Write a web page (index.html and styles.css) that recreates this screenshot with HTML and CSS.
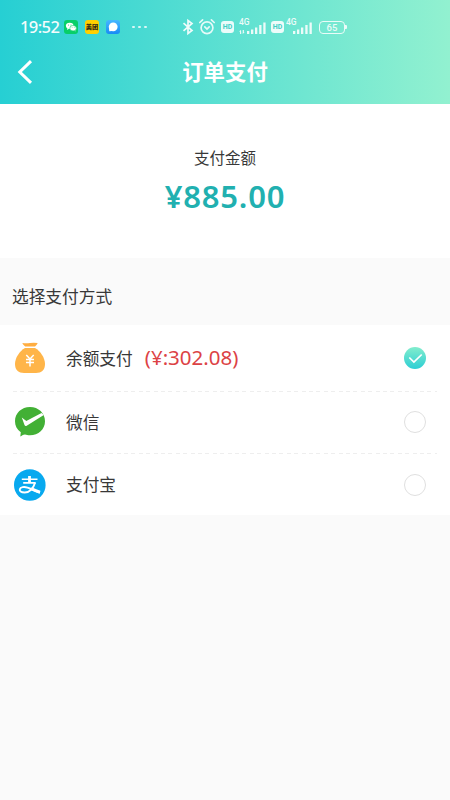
FILE: index.html
```html
<!DOCTYPE html>
<html lang="zh-CN">
<head>
<meta charset="utf-8">
<meta name="viewport" content="width=device-width, initial-scale=1">
<title>订单支付</title>
<link rel="stylesheet" href="styles.css">
</head>
<body>
<header class="header">
  <div class="status">
    <span class="time">19:52</span>
    <svg class="app-icon wechat-app" width="14" height="14" viewBox="0 0 14 14"><rect width="14" height="14" rx="3" fill="#07cf68"/><ellipse cx="5.7" cy="5.8" rx="3.8" ry="3.1" fill="#fff"/><path d="M3.5 8 3 10l2-1.2zM11 9.6l.5 1.8-1.8-.8z" fill="#fff"/><ellipse cx="9.1" cy="8.2" rx="3.3" ry="2.7" fill="#fff" stroke="#07cf68" stroke-width=".6"/><g fill="#07cf68"><circle cx="4.5" cy="5" r=".5"/><circle cx="7" cy="5" r=".5"/><circle cx="8.1" cy="7.7" r=".4"/><circle cx="10.2" cy="7.7" r=".4"/></g></svg>
    <span class="app-icon meituan">美团</span>
    <svg class="app-icon" width="14" height="14" viewBox="0 0 14 14"><defs><linearGradient id="sky" x2="0" y2="1"><stop stop-color="#45b8ff"/><stop offset="1" stop-color="#188bf5"/></linearGradient></defs><rect width="14" height="14" rx="3" fill="url(#sky)"/><circle cx="7.2" cy="6.8" r="4.4" fill="#fff"/><path d="M2.900 6.500 3.300 11.200l5-.4z" fill="#fff"/></svg>
    <span class="dots"><i></i><i></i><i></i></span>
    <svg class="bluetooth" width="12" height="18" viewBox="0 0 12 18"><path d="M1.500 5.200 10 12.500 6 15.500v-13L10 5.500 1.500 12.800" fill="none" stroke="#fff" stroke-width="1.700"/></svg>
    <svg class="alarm" width="18" height="18" viewBox="0 0 18 18" fill="none" stroke="#fff" stroke-width="1.7" stroke-linecap="round"><circle cx="9" cy="9.700" r="5.900"/><path d="m1.800 4.500 2.800-2.600M16.200 4.500l-2.800-2.600M6.800 8.800 9 11l2.200-2.200"/></svg>
    <span class="hd">HD</span>
    <span class="signal signal-a"><b>4G</b><svg width="28" height="16" viewBox="0 0 28 16" fill="#fff"><path d="M1 12.500h1.200V15H1zM.2 12.800 1.600 10.800l.6 2zM3.700 11h1.200v2.500H3.700zM3.700 13.200h2L3.700 15zM8 12h2.300v3H8zM12 10.500h2.300V15H12zM16 8.500h2.300V15H16zM20.200 6h2.300v9h-2.300zM24.300 3.500h2.300V15h-2.300z"/></svg></span>
    <span class="hd hd-b">HD</span>
    <span class="signal signal-b"><b>4G</b><svg width="28" height="16" viewBox="0 0 28 16" fill="#fff"><path d="M8 12h2.300v3H8zM12 10.500h2.300V15H12zM16 8.500h2.300V15H16zM20.300 6h2.300v9h-2.300zM24.500 3.500h2.300V15h-2.300z"/></svg></span>
    <span class="battery">65</span>
  </div>
  <div class="nav">
    <svg class="back" width="16" height="24" viewBox="0 0 16 24"><path d="M14 1.200 2.800 12 14 22.800" fill="none" stroke="#fff" stroke-width="3"/></svg>
    <h1>订单支付</h1>
  </div>
</header>
<section class="amount">
  <p class="label">支付金额</p>
  <p class="price">¥885.00</p>
</section>
<h2 class="section-title">选择支付方式</h2>
<ul class="methods">
  <li class="method first">
    <svg class="logo" width="34" height="34" viewBox="0 0 34 34"><path d="M9.500 1.900Q13 2.400 17 1.900t7.500 0q.4.600-2.500 3.600H12.200Q9.100 2.600 9.500 1.900Z" fill="#ffad40"/><path d="M12 7h10c5.500 3 10 10 10 16 0 6-3.500 9-9 9H11c-5.500 0-9-3-9-9C2 17 6.500 10 12 7Z" fill="#ffb549"/><path d="m13.300 14 3.700 4 3.700-4M17 18v7.500M13 18.500h8M13 21.500h8" fill="none" stroke="#fff" stroke-width="1.500"/></svg>
    <span class="name">余额支付</span><span class="balance">(¥:302.08)</span>
    <svg class="check" width="22" height="22" viewBox="0 0 22 22"><defs><linearGradient id="mint" x2="0" y2="1"><stop stop-color="#82edcd"/><stop offset="1" stop-color="#2dced4"/></linearGradient></defs><circle cx="11" cy="11" r="11" fill="url(#mint)"/><path d="m5.300 10.500 4.600 4.600 7.800-7.600" fill="none" stroke="#fff" stroke-width="1.700"/></svg>
  </li>
  <li class="method second">
    <svg class="logo" width="34" height="34" viewBox="0 0 34 34"><path d="M17 2c8.500 0 15 6.200 15 14.200s-6.500 14-15 14c-2.300 0-3.500-.3-5-.8-2.100.2-3.200 1.300-4.700 2.100l.5-4.200C4 24.500 2 20.700 2 16.200 2 8.200 8.500 2 17 2Z" fill="#42b035"/><path d="m8.800 12.500 4.500 3.500L28.500 8l2.300 2L13.700 20.700Q12.200 21.700 11.500 20Z" fill="#fff"/></svg>
    <span class="name">微信</span><i class="radio"></i>
  </li>
  <li class="method third">
    <svg class="logo" width="34" height="34" viewBox="0 0 34 34"><circle cx="16.800" cy="17" r="15.800" fill="#08a9ef"/><g fill="none" stroke="#fff"><path d="M8.800 11.200h15.700M10.200 14.900h12.500" stroke-width="1.600"/><path d="M16.500 8v7" stroke-width="2.800"/><path d="M22 14.800c-1.500 5.500-5.500 9.700-10.300 9.700-3.900 0-5.300-1.500-4.900-3.300.5-2.300 4.500-2.700 7.700-1.600 4 1.300 8 3.600 12.500 4.900" stroke-width="1.900"/><path d="M18.200 20.700c2.900 1.400 5.500 2.600 8.800 3.600" stroke-width="3"/></g></svg>
    <span class="name">支付宝</span><i class="radio"></i>
  </li>
</ul>
</body>
</html>
```

FILE: styles.css
```css
* { box-sizing: border-box; }
body { margin: 0; min-height: 800px; background: #fafafa; color: #383838; font-family: "Noto Sans CJK SC", sans-serif; }
p, h1, h2, ul { margin: 0; padding: 0; font-weight: 400; }
.header { height: 104px; color: #fff; background: linear-gradient(90deg, #26cfd3, #92f1d0); }
.status { display: flex; align-items: center; height: 40px; padding: 14px 0 0 20px; }
.time { flex: none; width: 44px; opacity: .95; font: 500 16.5px/24px "Noto Sans", sans-serif; letter-spacing: -.6px; white-space: nowrap; }
.app-icon { flex: none; width: 14px; height: 14px; margin-right: 7px; }
.meituan { border-radius: 3px; background: #ffd000; color: #322b15; font-size: 6.2px; line-height: 13px; font-weight: 900; text-align: center; white-space: nowrap; }
.dots { display: flex; gap: 3.5px; width: 57px; padding-left: 5px; opacity: .8; }
.dots i { width: 2.5px; height: 2.5px; border-radius: 50%; background: #fff; }
.bluetooth { flex: none; margin-left: -2px; opacity: .9; }
.alarm { flex: none; margin-left: 4px; opacity: .85; }
.hd { flex: none; width: 13px; height: 12px; margin-left: 5px; border-radius: 3px; background: rgba(255, 255, 255, .88); color: #42cfc5; font: 700 7px/12px Roboto, sans-serif; text-align: center; }
.signal { position: relative; flex: none; width: 28px; height: 16px; margin-left: 5px; opacity: .88; }
.signal svg { display: block; }
.signal b { position: absolute; left: 0; top: -1px; font: 500 8.5px/9px Roboto, sans-serif; }
.hd-b { margin-left: 4px; }
.signal-b { margin-left: 1px; }
.signal-b b { left: 1px; }
.battery { position: relative; flex: none; width: 26px; height: 13px; margin-left: 6px; border: 1.5px solid #fff; border-radius: 4px; opacity: .85; font: 500 9.5px/11px Roboto, sans-serif; text-align: center; }
.battery::after { content: ""; position: absolute; left: 25px; top: 3px; width: 2px; height: 4px; border-radius: 0 1px 1px 0; background: #fff; }
.nav { display: grid; grid-template-columns: 34px 1fr 34px; align-items: center; height: 63px; }
.back { margin-left: 16.5px; }
.nav h1 { margin-top: -1px; font-size: 21.4px; line-height: 32px; font-weight: 700; text-align: center; }
.amount { height: 154px; padding-top: 41px; background: #fff; text-align: center; }
.label { font-size: 15.5px; line-height: 24px; }
.price { margin-top: 7px; color: #21b0b0; font: 600 31px/40px "Noto Sans", sans-serif; letter-spacing: .8px; }
.section-title { height: 67px; padding: 26px 12px 0; font-size: 16.7px; line-height: 24px; }
.methods { height: 190px; padding: 0 13px; background: #fff; list-style: none; }
.method { display: flex; align-items: center; padding-right: 11px; }
.first { height: 67px; padding-bottom: 1px; }
.second { height: 62px; padding-bottom: 2px; }
.third { height: 61px; }
.first, .second { background: repeating-linear-gradient(90deg, #eee 0 4px, transparent 4px 7.4px) bottom / 100% 1px no-repeat; }
.logo { flex: none; width: 34px; margin-right: 19px; }
.name { margin-top: -1px; font-size: 16.7px; line-height: 24px; }
.balance { margin: -2px 0 0 12px; color: #dc4245; font: 400 20.5px/26px "Noto Sans", sans-serif; }
.check, .radio { flex: none; width: 22px; height: 22px; margin-left: auto; }
.radio { border: 1.5px solid #e0e0e0; border-radius: 50%; }
```
